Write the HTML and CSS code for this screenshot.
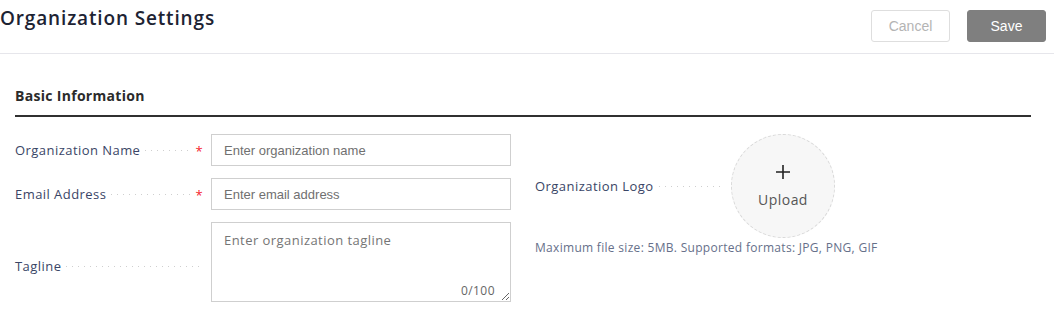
FILE: index.html
```html
<!DOCTYPE html>
<html>
<head>
<meta charset="utf-8">
<link rel="stylesheet" href="styles.css">
</head>
<body>
<div class="page">
  <header class="topbar">
    <h1 class="title">Organization Settings</h1>
    <div class="actions">
      <button class="btn btn-cancel">Cancel</button>
      <button class="btn btn-save">Save</button>
    </div>
  </header>
  <section class="section">
    <h2 class="section-title">Basic Information</h2>
    <div class="form">
      <div class="col">
        <div class="row">
          <div class="label"><span class="text">Organization Name</span><span class="leader"></span><span class="req">*</span></div>
          <input class="input" placeholder="Enter organization name">
        </div>
        <div class="row">
          <div class="label"><span class="text">Email Address</span><span class="leader"></span><span class="req">*</span></div>
          <input class="input" placeholder="Enter email address">
        </div>
        <div class="row row-tall">
          <div class="label label-tall"><span class="text">Tagline</span><span class="leader leader-end"></span></div>
          <div class="textarea-wrap">
            <textarea class="textarea" placeholder="Enter organization tagline"></textarea>
            <span class="counter">0/100</span>
          </div>
        </div>
      </div>
      <div class="col col-right">
        <div class="row row-logo">
          <div class="label"><span class="text">Organization Logo</span><span class="leader leader-end"></span></div>
          <div class="upload">
            <svg class="plus" width="16" height="16" viewBox="0 0 16 16"><path d="M8 1v14M1 8h14" stroke="#222" stroke-width="1.6" fill="none"/></svg>
            <span class="upload-text">Upload</span>
          </div>
        </div>
        <p class="hint">Maximum file size: 5MB. Supported formats: JPG, PNG, GIF</p>
      </div>
    </div>
  </section>
</div>
</body>
</html>
```

FILE: styles.css
```css
* { box-sizing: border-box; }
html, body { margin: 0; padding: 0; background: #fff; }
body { font-family: "Open Sans", "Noto Sans", sans-serif; letter-spacing: 0.45px; }
.page { width: 1054px; }
.topbar {
  display: flex;
  justify-content: space-between;
  align-items: flex-start;
  height: 54px;
  border-bottom: 1px solid #e6e6eb;
  padding: 0 8px 0 0;
}
.title {
  margin: 5px 0 0 0;
  font-size: 19px;
  font-weight: 600;
  color: #1d2333;
  letter-spacing: 0.85px;
}
.actions { display: flex; gap: 17px; margin-top: 10px; letter-spacing: 0; }
.btn {
  width: 79px;
  height: 32px;
  border-radius: 3px;
  font-family: "Liberation Sans", Arial, sans-serif;
  font-size: 14px;
  cursor: pointer;
}
.btn-cancel { background: #fff; border: 1px solid #dedede; color: #b4b4b4; }
.btn-save { background: #7f7f7f; border: 1px solid #7f7f7f; color: #fff; }
.section { padding: 0 23px 0 15px; }
.section-title {
  margin: 0;
  padding: 32px 0 10px;
  font-size: 14px;
  font-weight: 700;
  color: #2b2b2b;
  letter-spacing: 0.3px;
  border-bottom: 2px solid #303030;
}
.form { display: flex; gap: 24px; padding-top: 17px; }
.col { display: flex; flex-direction: column; gap: 12px; width: 496px; }
.col-right { gap: 0; width: auto; }
.row { display: flex; align-items: center; height: 32px; }
.row-tall { height: 80px; }
.row-logo { height: 104px; }
.label {
  width: 196px;
  display: flex;
  align-items: center;
  font-size: 13px;
  color: #3a4566;
  padding-right: 8px;
}
.label-tall { padding-top: 8px; }
.text { white-space: nowrap; }
.leader {
  flex: 1;
  height: 1px;
  margin: 1px 5px 0 5px;
  background-image: linear-gradient(to right, #cfcfcf 1px, transparent 1px);
  background-size: 6px 1px;
  background-repeat: repeat-x;
}
.leader-end { margin-right: 0; }
.req { color: #f5222d; font-size: 13px; line-height: 1; margin-top: 2px; }
.input {
  width: 300px;
  height: 32px;
  border: 1px solid #cfcfcf;
  border-radius: 0;
  padding: 0 12px;
  font-family: "Liberation Sans", Arial, sans-serif;
  font-size: 13px;
  color: #333;
  outline: none;
}
.input::placeholder { color: #707070; }
.textarea-wrap { position: relative; width: 300px; height: 80px; }
.textarea {
  width: 300px;
  height: 80px;
  border: 1px solid #cfcfcf;
  padding: 8px 12px;
  font-family: "Open Sans", sans-serif;
  font-size: 13px;
  letter-spacing: 0.45px;
  resize: vertical;
  outline: none;
  display: block;
}
.textarea::placeholder { color: #757575; }
.counter {
  position: absolute;
  right: 16px;
  bottom: 3px;
  font-size: 12px;
  color: #666;
}
.upload {
  width: 104px;
  height: 104px;
  border-radius: 50%;
  border: 1px dashed #d9d9d9;
  background: #f7f7f7;
  display: flex;
  flex-direction: column;
  align-items: center;
  justify-content: center;
}
.plus { display: block; margin-top: 0; }
.upload-text { font-size: 14px; color: #555; margin-top: 10px; }
.hint {
  margin: 1px 0 0 0;
  font-size: 12px;
  color: #66708a;
  letter-spacing: 0.3px;
}
```
